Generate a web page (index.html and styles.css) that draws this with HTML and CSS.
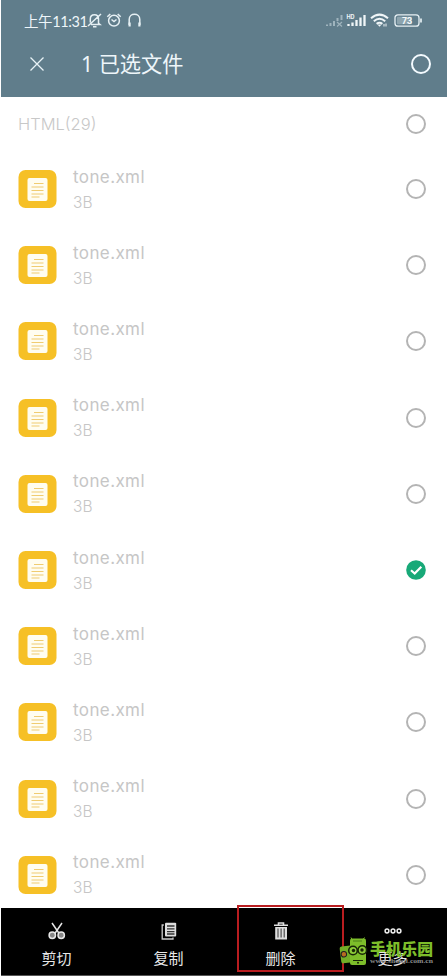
FILE: index.html
```html
<!DOCTYPE html>
<html lang="zh-CN">
<head>
<meta charset="utf-8">
<title>文件管理</title>
<link rel="stylesheet" href="styles.css">
</head>
<body>
<svg class="defs" aria-hidden="true">
  <symbol id="doc" viewBox="0 0 38 38">
    <rect width="38" height="38" rx="7" fill="#f6c026"/>
    <rect x="9" y="8" width="20" height="23" rx="2" fill="#fffdf0"/>
    <path d="M15.5 13.5H25M13 17H25M13 20.5H25M13 24H25M13 27H21" stroke="#f0cc70" stroke-width="1.1"/>
  </symbol>
</svg>
<div class="phone">
  <header class="top">
    <div class="status">
      <span class="time">上午11:31</span>
      <svg class="status-left" width="58" height="18" viewBox="0 0 58 18" fill="none" stroke="#e6f0f4" stroke-width="1.5">
        <path d="M4.3 11.5V8C4.3 5 6 3.7 8.5 3.7S12.5 5 12.5 8V12.2L14 13.5H5M2 15L15 3M7 15.8H10.5"/>
        <circle cx="28" cy="9.7" r="5.4"/><path d="M21.300 5.700L24.300 3M34.700 5.700L31.700 3M25.500 8.500L28 10.500L30.500 8.500"/>
        <path d="M43.200 14V8.5C43.200 1.6 53.800 1.6 53.800 8.5V14"/><path d="M43.600 11.5V15.5M53.400 11.5V15.5" stroke-width="2.2"/>
      </svg>
      <svg class="status-right" width="100" height="18" viewBox="0 0 100 18">
        <g stroke="#9fb4bd" stroke-width="2"><path d="M3 15V13.5M6.5 15V12M10 15V10M13.5 10V7M17.5 9V4"/><path d="M13 11L18 15.5M18 11L13 15.5" stroke-width="1.2"/></g>
        <text x="22.5" y="7.5" class="hd">HD</text>
        <path d="M24.500 15V13M28.500 15V11.5M32.500 15V9M36.500 15V6.5M40.500 15V4" stroke="#f0f6f8" stroke-width="2.3"/>
        <g fill="none" stroke="#f0f6f8" stroke-width="2"><path d="M47 7.3Q55.500 0 64 7.300M49.800 10.200Q55.500 5.400 61.200 10.200M52.600 12.900Q55.500 10.800 58.400 12.900"/></g>
        <path d="M53.500 13.500H57.500L55.500 15.800Z" fill="#f0f6f8"/><path d="M60 13V15.500M62 12.500V15.500" stroke="#f0f6f8"/>
        <rect x="71" y="3.800" width="24" height="11.400" rx="3" fill="none" stroke="#e6f0f4" stroke-width="1.300"/>
        <rect x="73" y="5.800" width="15" height="7.400" rx="1" fill="#8da4ae"/>
        <path d="M97 7.500V11.500" stroke="#e6f0f4" stroke-width="1.700"/>
        <text x="78" y="12.800" class="battery">73</text>
      </svg>
    </div>
    <div class="titlebar">
      <svg width="16" height="16" viewBox="0 0 16 16"><path d="M1.500 1.500L14.500 14.500M14.500 1.500L1.500 14.500" stroke="#e9f3f7" stroke-width="1.300"/></svg>
      <h1>1 已选文件</h1>
      <i class="ring light"></i>
    </div>
  </header>
  <main>
    <div class="group"><span>HTML(29)</span><i class="ring"></i></div>
    <div class="row"><svg class="file"><use href="#doc"/></svg><div class="info"><b>tone.xml</b><small>3B</small></div><i class="ring"></i></div>
    <div class="row"><svg class="file"><use href="#doc"/></svg><div class="info"><b>tone.xml</b><small>3B</small></div><i class="ring"></i></div>
    <div class="row"><svg class="file"><use href="#doc"/></svg><div class="info"><b>tone.xml</b><small>3B</small></div><i class="ring"></i></div>
    <div class="row"><svg class="file"><use href="#doc"/></svg><div class="info"><b>tone.xml</b><small>3B</small></div><i class="ring"></i></div>
    <div class="row"><svg class="file"><use href="#doc"/></svg><div class="info"><b>tone.xml</b><small>3B</small></div><i class="ring"></i></div>
    <div class="row"><svg class="file"><use href="#doc"/></svg><div class="info"><b>tone.xml</b><small>3B</small></div><svg class="checked" viewBox="0 0 20 20"><circle cx="10" cy="10" r="9.800" fill="#18a978"/><path d="M5 10.300L8.700 13.600L15.300 6.800" fill="none" stroke="#fff" stroke-width="2.200"/></svg></div>
    <div class="row"><svg class="file"><use href="#doc"/></svg><div class="info"><b>tone.xml</b><small>3B</small></div><i class="ring"></i></div>
    <div class="row"><svg class="file"><use href="#doc"/></svg><div class="info"><b>tone.xml</b><small>3B</small></div><i class="ring"></i></div>
    <div class="row"><svg class="file"><use href="#doc"/></svg><div class="info"><b>tone.xml</b><small>3B</small></div><i class="ring"></i></div>
    <div class="row"><svg class="file"><use href="#doc"/></svg><div class="info"><b>tone.xml</b><small>3B</small></div><i class="ring"></i></div>
  </main>
  <footer class="actions">
    <div class="action">
      <svg width="18" height="18" viewBox="0 0 18 18"><path d="M4 1L11.500 12M14 1L6.500 12" stroke="#e4e4e4" stroke-width="1.500"/><g fill="#888" stroke="#e8e8e8" stroke-width="1.500"><circle cx="4.300" cy="13.300" r="3.200"/><circle cx="13.200" cy="13.300" r="3.200"/></g></svg>
      <span>剪切</span>
    </div>
    <div class="action">
      <svg width="18" height="18" viewBox="0 0 18 18"><path d="M3.800 3H2.200V17H13V15.500" fill="none" stroke="#ccc" stroke-width="1.300"/><rect x="5" y=".800" width="11.200" height="13.700" rx="1" fill="#ddd"/><path d="M7 4H14.500M7 6.800H14.500M7 9.600H14.500M7 12H14.500" stroke="#333" stroke-width="1.300"/></svg>
      <span>复制</span>
    </div>
    <div class="action">
      <svg width="18" height="18" viewBox="0 0 18 18"><path d="M2 3.300H16M6.500 2.500V1H11.500V2.500" fill="none" stroke="#ddd" stroke-width="1.600"/><path d="M3.200 5H15V17.500H3.200Z" fill="#ddd"/><path d="M6 6.500V15.500M9.100 6.500V15.500M12.200 6.500V15.500" stroke="#444" stroke-width="1.100"/></svg>
      <span>删除</span>
    </div>
    <div class="action">
      <svg width="18" height="18" viewBox="0 0 18 18"><g fill="none" stroke="#eee" stroke-width="1.500"><circle cx="3" cy="9" r="1.900"/><circle cx="9" cy="9" r="1.900"/><circle cx="15" cy="9" r="1.900"/></g></svg>
      <span>更多</span>
    </div>
  </footer>
  <div class="highlight"></div>
  <svg class="watermark" width="98" height="32" viewBox="0 0 98 32">
    <g transform="rotate(-7 7 18)"><rect x="1.500" y="9" width="13" height="17" rx="2" fill="#72ad27"/><circle cx="5" cy="17" r="2.700" fill="#b96b20" stroke="#222"/></g>
    <path d="M13 2.500L12 .500M24 2.500L25.500 .500" stroke="#7dbd2a"/>
    <rect x="11" y="1.500" width="16" height="26.500" rx="2" fill="#7dbd2a"/>
    <path d="M14 4H23" stroke="#4d7f18"/>
    <g fill="#8bcb38" stroke="#182507" stroke-width="1.600"><circle cx="14" cy="13.500" r="4.300"/><circle cx="23.300" cy="13" r="4.300"/></g>
    <g fill="#182507"><circle cx="14.500" cy="13.500" r="1.700"/><circle cx="23" cy="13" r="1.700"/></g>
    <path d="M14 23.500H24" fill="none" stroke="#182507"/><circle cx="19" cy="25.800" r="1" fill="#182507"/>
    <text x="31" y="17.500" class="brand" textLength="63">手机乐园</text>
    <text x="31" y="25.500" class="site" textLength="63" lengthAdjust="spacingAndGlyphs">www.shouji.com.cn</text>
  </svg>
</div>
</body>
</html>
```
FILE: styles.css
```css
* { box-sizing: border-box; }
body { margin: 0; background: #fff; font-family: Inter, "Noto Sans CJK SC", sans-serif; }
.defs { position: absolute; width: 0; height: 0; }
.phone { position: relative; width: 447px; height: 977px; padding-left: 1px; overflow: hidden; }
.top { height: 97px; background: #607d8b; color: #eef6fa; }
.status { height: 39px; padding: 1px 23px 0 23px; display: flex; align-items: center; }
.time { width: 62px; font-family: Lato, "Noto Sans CJK SC", sans-serif; font-size: 14.500px; letter-spacing: -.4px; white-space: nowrap; }
.status-right { margin-left: auto; }
.hd { font: bold 5.500px Inter, sans-serif; fill: #f0f6f8; }
.battery { font: bold 8.500px Inter, sans-serif; fill: #f4f8fa; }
.titlebar { height: 50px; padding: 0 16px 0 28px; display: flex; align-items: center; }
h1 { margin: 0 auto 0 36px; font: 400 21.200px/32px "Noto Sans", "Noto Sans CJK SC", sans-serif; white-space: nowrap; }
.ring { display: block; flex: none; width: 20px; height: 20px; border: 2px solid #b4b4b4; border-radius: 50%; }
.ring.light { border-color: #f4fbff; border-width: 2.200px; }
main { height: 811px; }
.group { height: 54px; padding: 0 21px 0 17px; display: flex; align-items: center; justify-content: space-between; color: #c8c8c8; font-size: 16.500px; font-weight: 300; }
.row { height: 76.200px; padding: 0 21px 0 17px; display: flex; align-items: center; }
.file { width: 39px; height: 38px; flex: none; }
.info { margin: 0 auto 0 16px; height: 49px; color: #c6c6c6; }
.info b, .info small { display: block; font-weight: 400; line-height: 25px; }
.info b { font-size: 17px; letter-spacing: .4px; }
.info small { font-size: 15.500px; font-weight: 300; }
.checked { width: 20px; height: 20px; flex: none; }
.actions { height: 68px; margin-left: -.500px; display: grid; grid-template-columns: repeat(4, 112px); background: #000; border-bottom: 1px solid #555; }
.action { padding-top: 14px; display: flex; flex-direction: column; align-items: center; gap: 7px; color: #e8e8e8; font-size: 15px; line-height: 24px; }
.highlight { position: absolute; left: 237px; top: 905px; width: 107px; height: 67px; border: 2px solid #b91d20; }
.watermark { position: absolute; left: 339px; top: 937px; }
.brand { font: 900 15.800px "Noto Sans CJK SC", sans-serif; fill: #7dbd2a; }
.site { font: bold 7px "Liberation Serif", serif; fill: #8c8c8c; }
```
